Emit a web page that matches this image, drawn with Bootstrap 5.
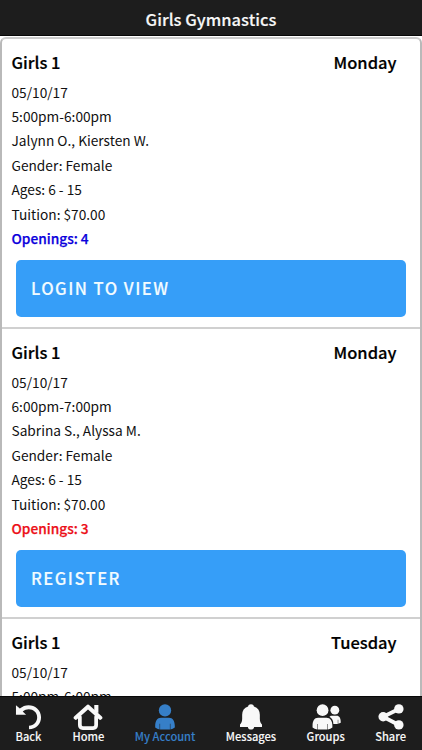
<!DOCTYPE html>
<html lang="en">
<head>
<meta charset="utf-8">
<meta name="viewport" content="width=device-width, initial-scale=1">
<title>Girls Gymnastics</title>
<link href="https://cdn.jsdelivr.net/npm/bootstrap@5.3.0/dist/css/bootstrap.min.css" rel="stylesheet">
<style>
body{height:750px;font-family:"Noto Sans CJK SC","Noto Sans CJK JP","Noto Sans",sans-serif;color:#111;font-size:13.7px;line-height:24.4px;background:#fff}
.topbar{height:36px;background:#1d1d1d;border-bottom:1px solid #080808;color:#f7f7f7;font-size:16.5px;line-height:39px;font-weight:500;-webkit-text-stroke:.15px}
.class-list{border:2px solid #b9b9b9;border-top-color:#ccc;border-bottom:0;border-radius:6px 6px 0 0;margin-top:1px}
.class-item{height:290px;padding:11px 9.5px 0;border-bottom:2px solid #d0d0d0}
.class-head{height:29.5px;font-size:16.5px;line-height:25px;font-weight:500;color:#000;padding-right:14px;-webkit-text-stroke:.2px}
.openings{font-weight:500;font-size:13.7px;-webkit-text-stroke:.25px}
.open-blue{color:#0b00dc}.open-red{color:#ec0f18}
.action-btn{height:57px;margin:10px 5px 0 4.5px;border-radius:5px;background:#369ef8;color:#f2fbff;font-size:16.6px;letter-spacing:1.45px;font-weight:500;padding:0 16px 2px 15px;-webkit-text-stroke:.15px}
.action-btn:hover{background:#238eea;color:#fff}
.bottombar{height:54.5px;background:#1d1d1d;border-top:1px solid #080808;color:#f8f8f8;padding:7px 16px 0 15px;font-size:11.1px;line-height:13px;font-weight:500;-webkit-text-stroke:.1px}
.bottombar a{color:inherit}
.bottombar a.current{color:#367fc8}
.bottombar svg{height:26.5px;display:block}
</style>
<script src="https://cdn.jsdelivr.net/npm/bootstrap@5.3.0/dist/js/bootstrap.bundle.min.js"></script>
</head>
<body class="d-flex flex-column overflow-hidden">
<header class="topbar flex-shrink-0 text-center">Girls Gymnastics</header>
<main class="class-list flex-grow-1 overflow-hidden">
  <section class="class-item">
    <div class="class-head d-flex justify-content-between"><span>Girls 1</span><span>Monday</span></div>
    <div>05/10/17</div><div>5:00pm-6:00pm</div><div>Jalynn O., Kiersten W.</div><div>Gender: Female</div><div>Ages: 6 - 15</div><div>Tuition: $70.00</div>
    <div class="openings open-blue">Openings: 4</div>
    <a href="#" class="action-btn d-flex align-items-center text-decoration-none">LOGIN TO VIEW</a>
  </section>
  <section class="class-item">
    <div class="class-head d-flex justify-content-between"><span>Girls 1</span><span>Monday</span></div>
    <div>05/10/17</div><div>6:00pm-7:00pm</div><div>Sabrina S., Alyssa M.</div><div>Gender: Female</div><div>Ages: 6 - 15</div><div>Tuition: $70.00</div>
    <div class="openings open-red">Openings: 3</div>
    <a href="#" class="action-btn d-flex align-items-center text-decoration-none">REGISTER</a>
  </section>
  <section class="class-item">
    <div class="class-head d-flex justify-content-between"><span>Girls 1</span><span>Tuesday</span></div>
    <div>05/10/17</div><div>5:00pm-6:00pm</div>
  </section>
</main>
<nav class="bottombar flex-shrink-0 d-flex justify-content-between">
  <a href="#" class="text-decoration-none d-flex flex-column align-items-center"><svg width="27" height="27" viewBox="0 0 28 27"><path d="M1 1V11h10.500L8 7.500C14 2.500 23 6 23 13.500c0 5-3.500 8.500-8.500 8.800v3.700C22 26 27 20.500 27 13.500 27 2 13-3 5 4.500Z" fill="currentColor"/></svg>Back</a>
  <a href="#" class="text-decoration-none d-flex flex-column align-items-center"><svg width="32" height="27" viewBox="0 0 32 27" fill="none" stroke="currentColor" stroke-linejoin="round" stroke-linecap="round"><path d="M3.500 14 16 2.800 28.500 14" stroke-width="4.200"/><path d="M24.500 1v8" stroke-width="4.200" stroke-linecap="butt"/><path d="M7.700 13v8.500q0 3 3 3h10.600q3 0 3-3V13" stroke-width="3.800"/></svg>Home</a>
  <a href="#" class="current text-decoration-none d-flex flex-column align-items-center"><svg width="22" height="27" viewBox="0 0 22 27" fill="currentColor"><circle cx="11" cy="6.500" r="6.300"/><path d="M7 14h8c4 0 6 3.500 6 8.500v1.500q-2 1.800-4.500 2V20h-.5v6H6v-6h-.5v6Q3 25.800 1 24v-1.500C1 17.500 3 14 7 14Z"/></svg>My Account</a>
  <a href="#" class="text-decoration-none d-flex flex-column align-items-center"><svg width="24" height="27" viewBox="0 0 24 27" fill="currentColor"><path d="M12 .3c1.600 0 2.700.8 3 2.300 4 1.300 6 4.300 6 8.400v4c0 3 1 4.500 2.200 6v2.400h-8C14.900 25.300 13.700 26 12 26s-2.900-.7-3.200-2.600h-8V21C2 19.500 3 18 3 15v-4c0-4.100 2-7.100 6-8.400C9.300 1.100 10.400.3 12 .3Z"/></svg>Messages</a>
  <a href="#" class="text-decoration-none d-flex flex-column align-items-center"><svg width="30" height="27" viewBox="0 0 30 27" fill="currentColor"><circle cx="11.500" cy="6.300" r="6"/><circle cx="24" cy="6.300" r="4.500"/><path d="M7 14h8.500c4 0 6 3.500 6 8v2q-2 1.700-4.500 2v-5.500h-.5V26H6.500v-5.500H6V26q-2.800-.3-4.700-2v-2C1.300 17.500 3 14 7 14ZM20 12h6c2.500 0 4 2.300 4 6v1l-2.500 1v-4H27v4.300h-4.500c0-3.500-1.500-6-4-7.300Z"/></svg>Groups</a>
  <a href="#" class="text-decoration-none d-flex flex-column align-items-center"><svg width="26" height="27" viewBox="0 0 26 27" fill="currentColor"><path d="M21 5 5 13l16 8.500" fill="none" stroke="currentColor" stroke-width="4"/><circle cx="21" cy="5" r="4.800"/><circle cx="5" cy="13" r="4.800"/><circle cx="21" cy="21.300" r="4.800"/></svg>Share</a>
</nav>
</body>
</html>
